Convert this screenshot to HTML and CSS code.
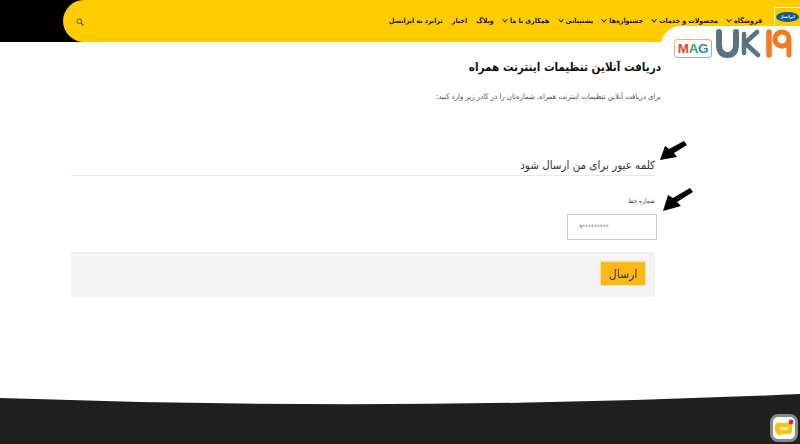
FILE: index.html
```html
<!DOCTYPE html>
<html lang="fa" dir="rtl">
<head>
<meta charset="utf-8">
<title>دریافت آنلاین تنظیمات اینترنت همراه</title>
<link rel="stylesheet" href="styles.css">
</head>
<body>
<div class="page">
  <header class="top">
    <div class="bar">
      <a class="logo"><span class="logo-oval">ایرانسل</span></a>
      <nav class="nav">
        <a>فروشگاه<i class="chev"></i></a>
        <a>محصولات و خدمات<i class="chev"></i></a>
        <a>جشنواره‌ها<i class="chev"></i></a>
        <a>پشتیبانی<i class="chev"></i></a>
        <a>همکاری با ما<i class="chev"></i></a>
        <a>وبلاگ</a>
        <a>اخبار</a>
        <a>ترابرد به ایرانسل</a>
      </nav>
      <svg class="search" viewBox="0 0 10 10" width="8" height="8"><circle cx="4" cy="4" r="2.8" fill="none" stroke="#6a5a10" stroke-width="1.3"/><path d="M6 6l3.4 3.4" stroke="#6a5a10" stroke-width="1.6"/></svg>
    </div>
  </header>

  <main class="main">
    <h1 class="title">دریافت آنلاین تنظیمات اینترنت همراه</h1>
    <p class="lead">برای دریافت آنلاین تنظیمات اینترنت همراه، شماره‌تان را در کادر زیر وارد کنید:</p>
    <h2 class="sub">کلمه عبور برای من ارسال شود</h2>
    <label class="label">شماره خط</label>
    <div class="input">۰۹*********</div>
    <div class="actions"><button class="send">ارسال</button></div>
  </main>

  <footer class="foot">
    <svg class="curve" viewBox="0 0 800 54" width="800" height="54"><path d="M0 8 Q400 22 800 4 V54 H0 Z" fill="#1f1f1f"/></svg>
  </footer>

  <div class="mark">
    <span class="mag"><b class="r">M</b><b class="g">A</b><b class="b">G</b></span>
    <svg class="uk19" viewBox="0 0 76 30" width="76" height="30">
      <path d="M3 3V15Q3 26 11.500 26Q20 26 20 15V3" fill="none" stroke="#5b7282" stroke-width="6" stroke-linecap="round"/>
      <path d="M28 5V24M41 3L29 14L42 26" fill="none" stroke="#5b7282" stroke-width="4.500" stroke-linecap="round" stroke-linejoin="round"/>
      <path d="M53 3V26" fill="none" stroke="#f47a1c" stroke-width="5.500" stroke-linecap="round"/>
      <path d="M73 10A7 7 0 1 0 73 10.100V26" fill="none" stroke="#f47a1c" stroke-width="5" stroke-linecap="round"/>
    </svg>
  </div>

  <svg class="arrow arrow-a" viewBox="0 0 27 20" width="27" height="20"><path d="M0 20L5 6 9 9 24 1 27 5 14 13 17 17Z" fill="#000"/></svg>
  <svg class="arrow arrow-b" viewBox="0 0 30 24" width="30" height="24"><path d="M0 24L5 8 10 11 27 1 30 5 14 15 18 19Z" fill="#000"/></svg>

  <div class="chat">
    <svg viewBox="0 0 20 18" width="20" height="18"><path d="M4 4H15Q18 4 18 7V12Q18 15 15 15H8L4 17V15Q1 14 1 11V7Q1 4 4 4Z" fill="#fcc30c"/><rect x="6" y="8" width="8" height="3" fill="#fff0b0"/><circle cx="17" cy="3" r="2.4" fill="#e0204a"/></svg>
  </div>
</div>
</body>
</html>
```
FILE: styles.css
```css
* { box-sizing: border-box; }
html, body { margin: 0; padding: 0; }
body { font-family: "DejaVu Sans Condensed", "DejaVu Sans", sans-serif; background: #fff; color: #222; }
.page { position: relative; width: 800px; height: 444px; overflow: hidden; display: flex; flex-direction: column; }

.top { height: 42px; background: #000; flex: none; }
.bar { margin-left: 63px; height: 42px; background: #ffcc00; border-top-left-radius: 21px; border-bottom-left-radius: 21px; display: flex; align-items: flex-start; position: relative; }
.logo { width: 26px; height: 19px; margin-top: 7px; flex: none; background: #ffcc00; border: 1px solid #fff; border-right: 0; border-bottom: 0; display: flex; align-items: center; justify-content: center; }
.logo-oval { width: 23px; height: 10px; border-radius: 50%; background: #0f5d92; color: #fff; font-size: 4px; font-weight: 700; line-height: 10px; text-align: center; }
.nav { display: flex; gap: 9.200px; margin-right: 12px; margin-top: 15px; font-size: 7px; font-weight: 700; color: #111; white-space: nowrap; line-height: 12px; }
.nav a { display: flex; align-items: center; gap: 3px; }
.chev { width: 4px; height: 4px; border: solid #222; border-width: 0 1px 1px 0; transform: rotate(45deg) translate(-1px, -1px); display: block; }
.search { position: absolute; left: 13px; top: 18px; }

.main { flex: 1; padding: 15px 139px 0 71px; }
.title { margin: 0; font-size: 11.600px; line-height: 20px; font-weight: 700; color: #111; }
.lead { margin: 13px 0 0; font-size: 7.700px; line-height: 14px; color: #555; }
.sub { margin: 49px 6px 0 0; padding: 2px 0 0; font-size: 11.500px; line-height: 20px; font-weight: 400; color: #333; border-bottom: 1px solid #e8e8e8; }
.label { display: block; margin: 19px 6px 0 0; font-size: 6.500px; line-height: 12px; color: #444; }
.input { width: 90px; height: 26px; margin: 7px 4px 0 0; border: 1px solid #ccc; padding: 0 8px; line-height: 24px; font-size: 6.500px; color: #777; text-align: left; direction: ltr; }
.actions { height: 45px; margin: 12px 6px 0 0; padding: 8px 9px; background: #f4f4f4; border-top: 1px solid #eee; }
.send { display: block; width: 46px; height: 25px; padding: 0; background: #fdb913; border: 1px solid #f0e2b0; font: 400 12px/22px "DejaVu Sans Condensed", "DejaVu Sans", sans-serif; color: #333; }

.foot { height: 54px; flex: none; position: relative; }
.curve { display: block; }

.mark { position: absolute; right: 0; top: 26px; width: 139px; height: 38px; background: #fff; border-top-left-radius: 20px; display: flex; align-items: flex-start; justify-content: flex-end; padding: 3px 8px 0 0; direction: ltr; gap: 4px; }
.mag { margin-top: 10px; width: 38px; height: 19px; border: 1px solid #7fb2e5; border-top-color: #f3b25c; border-left-color: #f3b25c; border-radius: 4px; font: 700 13.500px/17px "Liberation Sans", sans-serif; text-align: center; letter-spacing: -0.300px; }
.mag .r { color: #e5453c; } .mag .g { color: #3ca55c; } .mag .b { color: #3b7fd6; }
.uk19 { flex: none; }

.arrow { position: absolute; }
.arrow-a { left: 660px; top: 140px; }
.arrow-b { left: 663px; top: 187px; }

.chat { position: absolute; right: 2px; bottom: 2px; width: 28px; height: 28px; background: #fff; border: 3px solid #888; border-radius: 8px; display: flex; align-items: center; justify-content: center; }
```
